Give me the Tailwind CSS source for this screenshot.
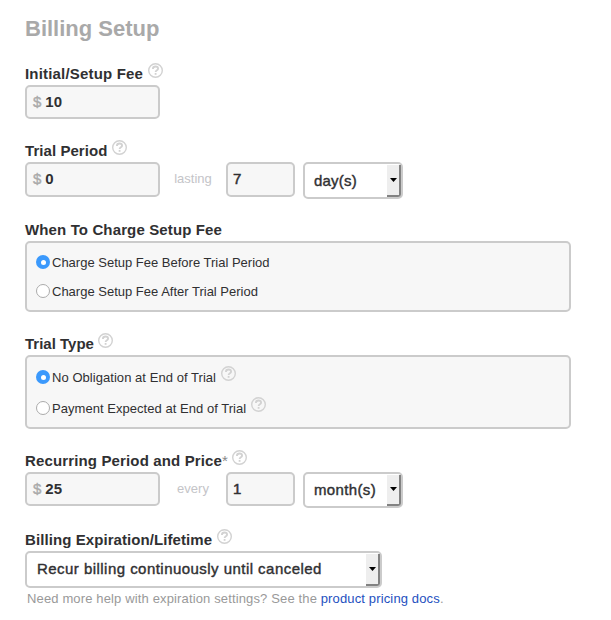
<!DOCTYPE html>
<html lang="en">
<head>
<meta charset="utf-8">
<title>Billing Setup</title>
<script src="https://cdn.jsdelivr.net/npm/@tailwindcss/browser@4"></script>
</head>
<body class="bg-white text-[#303032] font-['Liberation_Sans',Arial,sans-serif] overflow-hidden">
<svg class="hidden">
  <symbol id="help" viewBox="0 0 15 15">
    <circle cx="7.5" cy="7.5" r="6.8" fill="none" stroke="currentColor" stroke-width="1.4"/>
    <path d="M4.9 5.9C4.9 4.3 6 3.5 7.5 3.5S10.1 4.3 10.1 5.7C10.1 7.3 7.6 7.2 7.6 9.1" fill="none" stroke="currentColor" stroke-width="1.8"/>
    <path d="M6.7 10h1.8v1.8H6.7z" fill="currentColor"/>
  </symbol>
</svg>
<form class="flex h-[620px] w-[611px] flex-col pl-[25px] whitespace-nowrap">
  <h1 class="mb-[19px] h-[44px] pt-[15px] text-[22px] leading-[27px] font-bold text-[#a9a9a9]">Billing Setup</h1>

  <section class="h-[77px]">
    <div class="flex h-[22px] text-[15px] leading-[22px] font-bold"><span class="w-[123px] tracking-[0.18px]">Initial/Setup Fee</span><svg class="size-[15px] text-[#d2d2d2]"><use href="#help"/></svg></div>
    <div class="flex h-[34px] w-[135px] items-center gap-1 rounded-[5px] border-2 border-[#cbcbcb] bg-[#f7f7f7] pl-[6px] text-[15px] font-bold"><span class="font-normal text-[#aaa] [-webkit-text-stroke:0.4px]">$</span><span>10</span></div>
  </section>

  <section class="h-[79px]">
    <div class="flex h-[22px] text-[15px] leading-[22px] font-bold"><span class="w-[87px] tracking-[0.06px]">Trial Period</span><svg class="size-[15px] text-[#d2d2d2]"><use href="#help"/></svg></div>
    <div class="flex items-start text-[15px]">
      <div class="flex h-[35px] w-[135px] items-center gap-1 rounded-[5px] border-2 border-[#cbcbcb] bg-[#f7f7f7] pl-[6px] font-bold"><span class="font-normal text-[#aaa] [-webkit-text-stroke:0.4px]">$</span><span>0</span></div>
      <span class="w-[66px] text-center text-[13px] leading-[34px] text-[#c4c4c8]">lasting</span>
      <div class="flex h-[35px] w-[69px] items-center rounded-[5px] border-2 border-[#cbcbcb] bg-[#f7f7f7] pl-[5px] [-webkit-text-stroke:0.5px]">7</div>
      <div class="ml-2 flex h-[37px] w-[100px] items-center justify-between rounded-[5px] border-2 border-[#cbcbcb] bg-white pl-[9px] [-webkit-text-stroke:0.4px]"><span class="pt-px tracking-[0.2px]">day(s)</span><span class="flex h-[32px] w-[14px] items-center justify-center rounded-br-[3px] border-r-2 border-b-2 border-[#828282] bg-[#eee]"><svg class="h-[4px] w-[7px]" viewBox="0 0 7 4"><path d="M0 0h7L3.5 4z"/></svg></span></div>
    </div>
  </section>

  <section class="h-[114px]">
    <div class="h-[22px] text-[15px] leading-[22px] font-bold"><span class="tracking-[0.13px]">When To Charge Setup Fee</span></div>
    <div class="h-[71px] w-[546px] rounded-[5px] border-2 border-[#cbcbcb] bg-[#f7f7f7] pt-[5px] pl-[9px] text-[13px]">
      <div class="flex h-[29px] items-center gap-[2px]"><span class="mb-px flex size-[14px] items-center justify-center rounded-full bg-[#3b99fc]"><span class="size-[5px] rounded-full bg-white"></span></span><span>Charge Setup Fee Before Trial Period</span></div>
      <div class="flex h-[29px] items-center gap-[2px]"><span class="mb-px size-[14px] rounded-full border border-[#ababab] bg-white"></span><span>Charge Setup Fee After Trial Period</span></div>
    </div>
  </section>

  <section class="h-[117px]">
    <div class="flex h-[22px] text-[15px] leading-[22px] font-bold"><span class="w-[73px]">Trial Type</span><svg class="size-[15px] text-[#d2d2d2]"><use href="#help"/></svg></div>
    <div class="h-[74px] w-[546px] rounded-[5px] border-2 border-[#cbcbcb] bg-[#f7f7f7] pt-[5px] pl-[9px] text-[13px]">
      <div class="flex h-[31px] items-center gap-[2px]"><span class="mb-px flex size-[14px] items-center justify-center rounded-full bg-[#3b99fc]"><span class="size-[5px] rounded-full bg-white"></span></span><span class="w-[167px] tracking-[0.05px]">No Obligation at End of Trial</span><svg class="mb-[8px] size-[15px] text-[#d2d2d2]"><use href="#help"/></svg></div>
      <div class="flex h-[31px] items-center gap-[2px]"><span class="mb-px size-[14px] rounded-full border border-[#ababab] bg-white"></span><span class="w-[197px] tracking-[0.04px]">Payment Expected at End of Trial</span><svg class="mb-[8px] size-[15px] text-[#d2d2d2]"><use href="#help"/></svg></div>
    </div>
  </section>

  <section class="h-[79px]">
    <div class="flex h-[22px] text-[15px] leading-[22px] font-bold"><span class="w-[207px] tracking-[0.14px]">Recurring Period and Price<span class="font-normal text-[#888]">*</span></span><svg class="size-[15px] text-[#d2d2d2]"><use href="#help"/></svg></div>
    <div class="flex items-start text-[15px]">
      <div class="flex h-[34px] w-[135px] items-center gap-1 rounded-[5px] border-2 border-[#cbcbcb] bg-[#f7f7f7] pl-[6px] font-bold"><span class="font-normal text-[#aaa] [-webkit-text-stroke:0.4px]">$</span><span>25</span></div>
      <span class="w-[66px] text-center text-[13px] leading-[34px] text-[#c4c4c8]">every</span>
      <div class="flex h-[34px] w-[69px] items-center rounded-[5px] border-2 border-[#cbcbcb] bg-[#f7f7f7] pl-[5px] [-webkit-text-stroke:0.5px]">1</div>
      <div class="ml-2 flex h-[36px] w-[100px] items-center justify-between rounded-[5px] border-2 border-[#cbcbcb] bg-white pl-[9px] [-webkit-text-stroke:0.4px]"><span class="tracking-[0.35px]">month(s)</span><span class="flex h-[31px] w-[14px] items-center justify-center rounded-br-[3px] border-r-2 border-b-2 border-[#828282] bg-[#eee]"><svg class="h-[4px] w-[7px]" viewBox="0 0 7 4"><path d="M0 0h7L3.5 4z"/></svg></span></div>
    </div>
  </section>

  <section>
    <div class="flex h-[22px] text-[15px] leading-[22px] font-bold"><span class="w-[192px] tracking-[0.08px]">Billing Expiration/Lifetime</span><svg class="size-[15px] text-[#d2d2d2]"><use href="#help"/></svg></div>
    <div class="flex h-[37px] w-[357px] items-center justify-between rounded-[5px] border-2 border-[#cbcbcb] bg-white pl-[10px] text-[15px] [-webkit-text-stroke:0.4px]"><span class="tracking-[0.46px]">Recur billing continuously until canceled</span><span class="flex h-[32px] w-[14px] items-center justify-center rounded-br-[3px] border-r-2 border-b-2 border-[#828282] bg-[#eee]"><svg class="h-[4px] w-[7px]" viewBox="0 0 7 4"><path d="M0 0h7L3.5 4z"/></svg></span></div>
    <p class="pl-[2px] text-[13px] leading-[21px] tracking-[0.14px] text-[#999]">Need more help with expiration settings? See the <a class="text-[#2450c0]">product pricing docs</a>.</p>
  </section>
</form>
</body>
</html>
